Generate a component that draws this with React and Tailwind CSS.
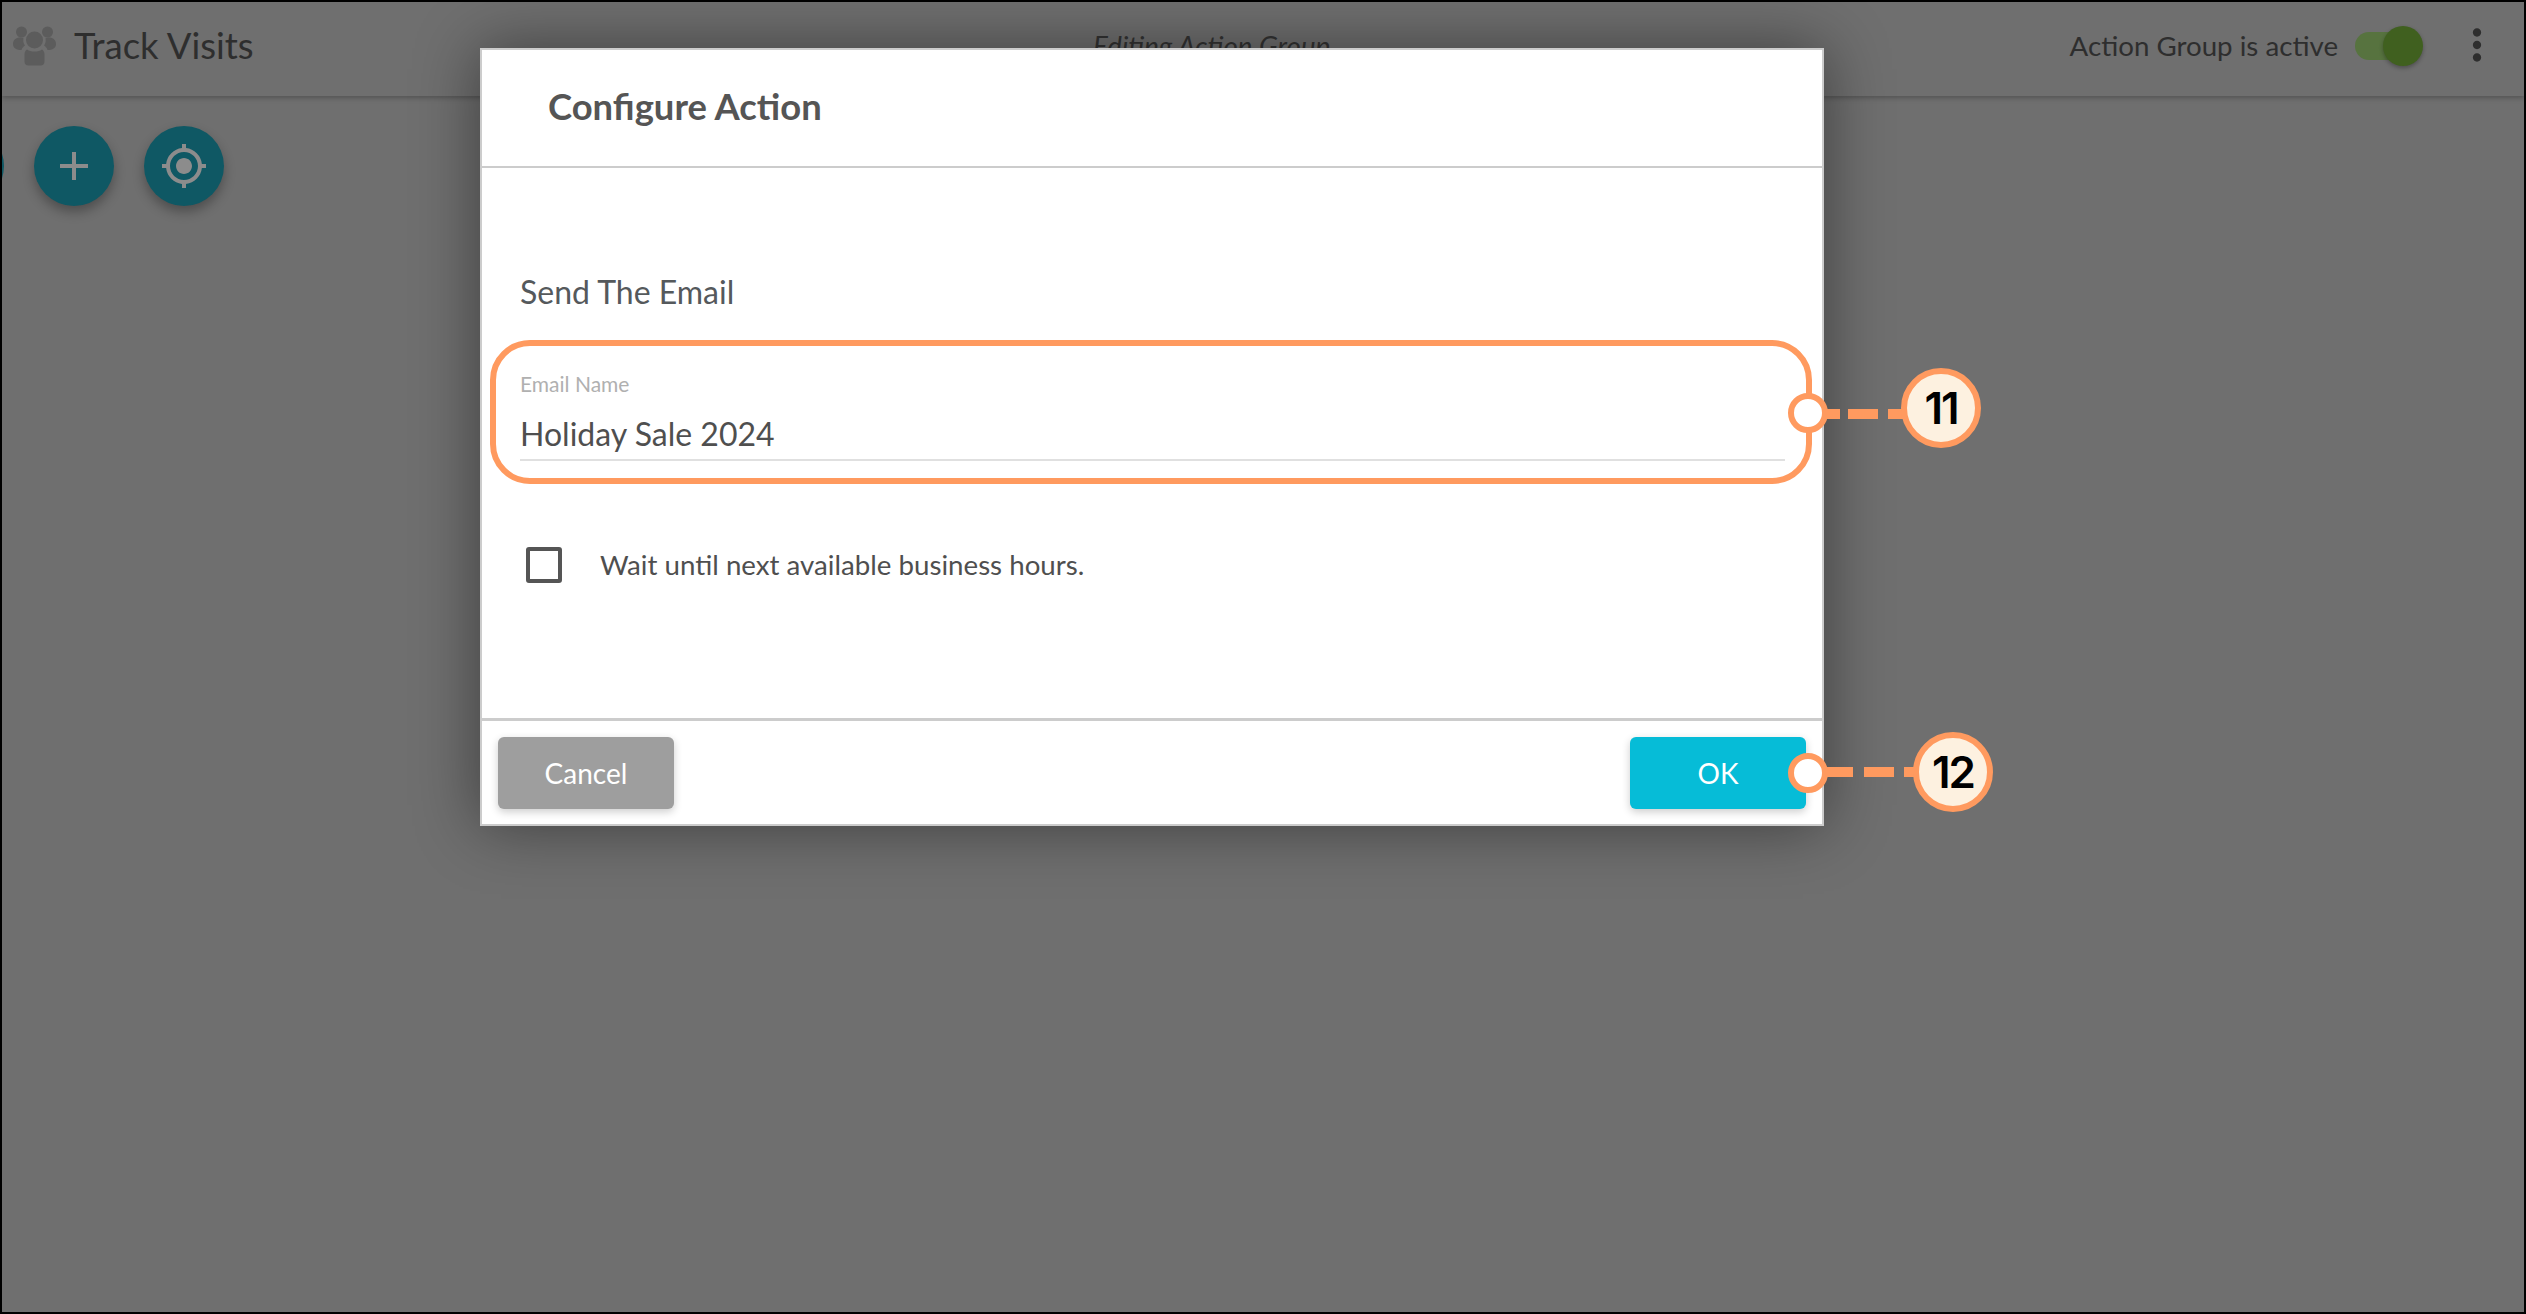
import { MdAdd, MdGpsFixed, MdMoreVert } from 'react-icons/md';

const GroupIcon = () => (
    <svg width="44" height="40" viewBox="0 0 44 40" fill="#5c5c5c">
        <circle cx="8.5" cy="6" r="5.5" />
        <circle cx="34.5" cy="6" r="5.5" />
        <circle cx="21.5" cy="14" r="8.5" />
        <path d="M0 18c0-4 3-6.500 7-6.500 1.500 0 2.500.3 3.500.8-.5 2-.3 5 1.500 7.200-1.500 1-3 2.500-3.500 4.500-5 0-8.500-2-8.500-6z" />
        <path d="M43 18c0-4-3-6.500-7-6.500-1.500 0-2.500.3-3.500.8.5 2 .3 5-1.500 7.200 1.500 1 3 2.500 3.500 4.500 5 0 8.500-2 8.500-6z" />
        <path d="M14 23.500c2 1.500 4.500 2 7.500 2s5.500-.5 7.500-2c1.500 1 2.500 2.500 2.500 5v7c0 2.500-1.500 4-4 4h-12c-2.500 0-4-1.500-4-4v-7c0-2.500 1-4 2.500-5z" />
    </svg>
);

const Callout = ({ label, markerClass, badgeClass, dashes }) => (
    <>
        <div className={`absolute w-[40px] h-[40px] rounded-full bg-white border-[6px] border-[#ff9a5f] ${markerClass}`} />
        {dashes.map((d) => (
            <div key={d} className={`absolute h-[10px] bg-[#ff9a5f] ${d}`} />
        ))}
        <div className={`absolute w-[80px] h-[80px] rounded-full bg-[#fdf1e0] border-[6px] border-[#ff9a5f] flex items-center justify-center text-[44px] font-semibold text-black font-['Inter'] tracking-[-2px] ${badgeClass}`}>
            {label}
        </div>
    </>
);

const App = () => {
    return (
        <div className="relative w-[2526px] h-[1314px] box-border border-2 border-black bg-[#6f6f6f] overflow-hidden font-['Lato',sans-serif]">
            {/* page behind the dialog */}
            <div className="flex items-center h-[94px] pb-[6px] pl-[11px] pr-[23px] bg-[#6f6f6f] shadow-[0_2px_5px_rgba(0,0,0,0.25)]">
                <GroupIcon />
                <span className="ml-[17px] -mt-[2px] text-[36.5px] text-[#2e2e2e]">Track Visits</span>
                <span className="absolute left-[1091px] top-[23px] text-[27.7px] italic text-[#333333]">Editing Action Group</span>
                <span className="ml-auto text-[27.7px] text-[#2e2e2e]">Action Group is active</span>
                <div className="relative ml-[17px] w-[64px] h-[28px] rounded-full bg-[#57733f]">
                    <div className="absolute left-[28px] top-[-6px] w-[40px] h-[40px] rounded-full bg-[#40601f] shadow-[0_2px_4px_rgba(0,0,0,0.3)]" />
                </div>
                <MdMoreVert size={50} className="ml-[33px] -mr-[1px] -mt-[3px] text-[#2e2e2e]" />
            </div>
            <div className="relative flex gap-[30px] pt-[30px] pl-[32px]">
                <div className="absolute left-[-78px] top-[30px] w-[80px] h-[80px] rounded-full bg-[#0f5864]" />
                <div className="flex items-center justify-center w-[80px] h-[80px] rounded-full bg-[#0f5864] shadow-[0_6px_12px_rgba(0,0,0,0.3)] text-[#8c8c8c]">
                    <MdAdd size={48} />
                </div>
                <div className="flex items-center justify-center w-[80px] h-[80px] rounded-full bg-[#0f5864] shadow-[0_6px_12px_rgba(0,0,0,0.3)] text-[#8c8c8c]">
                    <MdGpsFixed size={48} />
                </div>
            </div>

            {/* dialog */}
            <div className="absolute left-[478px] top-[46px] w-[1344px] h-[778px] box-border border-2 border-[#cccccc] bg-white flex flex-col shadow-[0_0_60px_rgba(0,0,0,0.45)]">
                <div className="h-[118px] shrink-0 box-border border-b-2 border-[#cccccc] flex items-center pl-[66px] pb-[3px]">
                    <h1 className="text-[36.4px] font-bold text-[#555555]">Configure Action</h1>
                </div>
                <div className="flex-1 pl-[38px] pr-[37px] pt-[100px]">
                    <div className="text-[32px] leading-[48px] text-[#55595c]">Send The Email</div>
                    <div className="mt-[56px] text-[21px] leading-[24px] text-[#b0b0b0]">Email Name</div>
                    <div className="mt-[15px] h-[50px] box-border border-b-2 border-[#e0e0e0] text-[32px] leading-[46px] text-[#4f4f4f]">Holiday Sale 2024</div>
                    <div className="flex items-center mt-[83px] ml-[6px]">
                        <div className="w-[36px] h-[36px] box-border border-[4px] border-[#555555] rounded-[3px]" />
                        <span className="ml-[38px] text-[27.7px] text-[#4f4f4f]">Wait until next available business hours.</span>
                    </div>
                </div>
                <div className="h-[106px] shrink-0 box-border border-t-[3px] border-[#cccccc] flex items-center justify-between px-[16px]">
                    <button className="w-[176px] h-[72px] rounded-[6px] bg-[#9e9e9e] text-white text-[28px] shadow-[0_3px_8px_rgba(0,0,0,0.2)]">Cancel</button>
                    <button className="w-[176px] h-[72px] rounded-[6px] bg-[#06bcd7] text-white text-[28px] shadow-[0_3px_8px_rgba(0,0,0,0.2)]">OK</button>
                </div>
            </div>

            {/* annotations */}
            <div className="absolute left-[488px] top-[338px] w-[1322px] h-[144px] box-border border-[6px] border-[#ff9a5f] rounded-[40px]" />
            <Callout
                label="11"
                markerClass="left-[1786px] top-[391px]"
                badgeClass="left-[1899px] top-[366px]"
                dashes={['left-[1824px] top-[407px] w-[14px]', 'left-[1846px] top-[407px] w-[30px]', 'left-[1886px] top-[407px] w-[16px]']}
            />
            <Callout
                label="12"
                markerClass="left-[1786px] top-[751px]"
                badgeClass="left-[1911px] top-[730px]"
                dashes={['left-[1824px] top-[765px] w-[27px]', 'left-[1862px] top-[765px] w-[30px]', 'left-[1902px] top-[765px] w-[14px]']}
            />
        </div>
    );
};

export default App;
